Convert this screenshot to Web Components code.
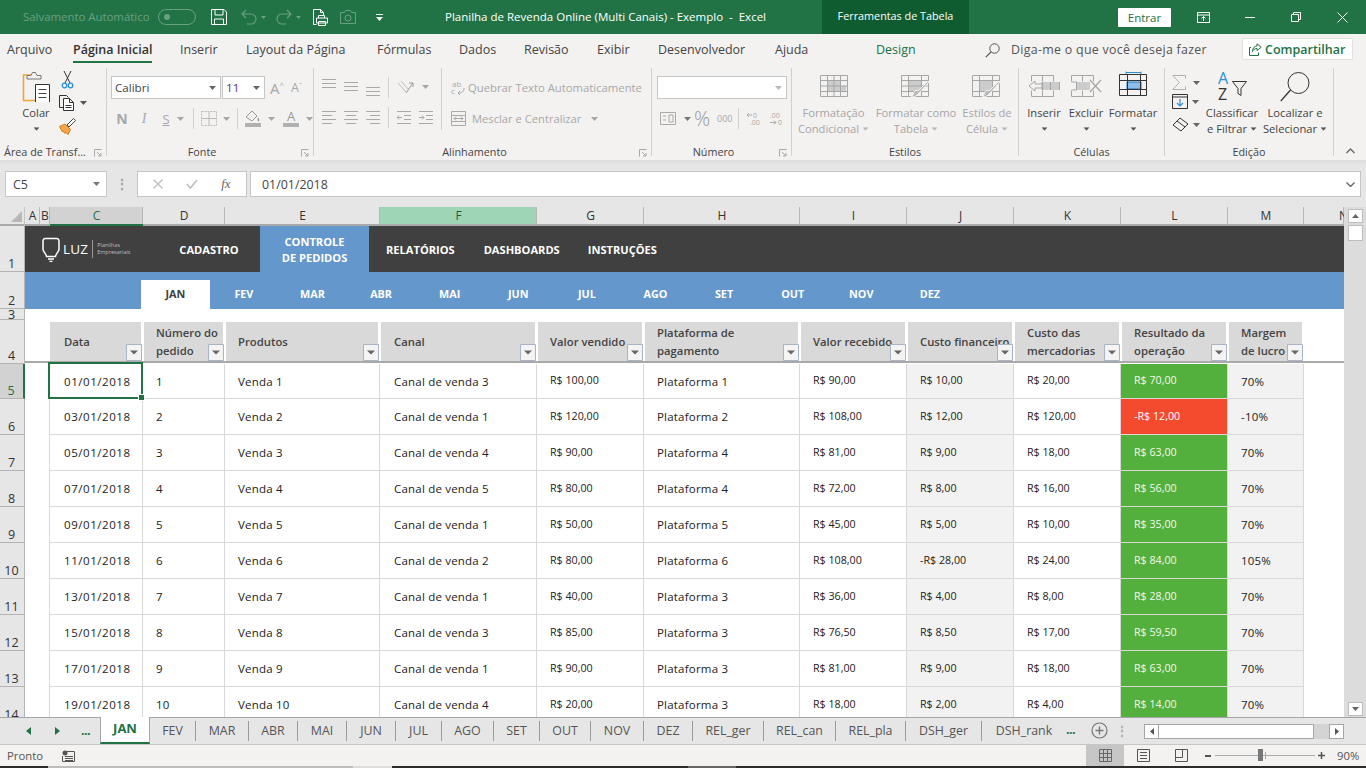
<!DOCTYPE html>
<html lang="pt-BR">
<head>
<meta charset="utf-8">
<title>Planilha de Revenda Online</title>
<style>
html, body { margin: 0; padding: 0; background: #e6e6e6; }
body { width: 1366px; height: 768px; overflow: hidden; font-family: "Open Sans", "Noto Sans", sans-serif; color: #444; display: flex; flex-direction: column; }
</style>
</head>
<body>
<x-titlebar></x-titlebar>
<x-menubar></x-menubar>
<x-ribbon></x-ribbon>
<x-formula-bar cell="C5" value="01/01/2018"></x-formula-bar>
<x-sheet></x-sheet>
<x-sheet-tabs></x-sheet-tabs>
<x-status-bar></x-status-bar>

<script>
(function(){

    // Small shared helpers for the icons
    const svg = (w, h, inner, extra = '') => `<svg width="${w}" height="${h}" viewBox="0 0 ${w} ${h}" fill="none" ${extra}>${inner}</svg>`;
    const dd = (c = '#a6a6a6') => svg(7, 4, `<path d="M0 0h7L3.5 4z" fill="${c}"/>`, 'class="dd"');
    const define = (name, css, html) => customElements.define(name, class extends HTMLElement {
        constructor() {
            super();
            this.attachShadow({ mode: 'open' }).innerHTML = `<style>${css}</style>${typeof html === 'function' ? html(this) : html}`;
        }
    });

    // Title bar
    const MUTED = '#6b9f82';
    define('x-titlebar', `
        :host { display: flex; flex: none; height: 34px; background: #217346; color: #fff; font-size: 11.5px; align-items: center; }
        div, span { flex: none; white-space: nowrap; }
        svg { flex: none; display: block; }
        .auto { width: 135px; margin: -2px 0 0 23px; color: ${MUTED}; font-size: 11.4px; }
        .toggle { width: 38px; height: 16px; box-sizing: border-box; border: 1px solid ${MUTED}; border-radius: 8px; padding: 4px 0 0 5px; margin-right: 15px; }
        .toggle i { display: block; width: 6px; height: 6px; border-radius: 50%; background: ${MUTED}; }
        .title { width: 377px; margin-top: -2px; }
        .tools { width: 147px; height: 34px; line-height: 32px; background: #0e5c2f; text-align: center; font-size: 10.8px; }
        .enter { width: 53px; height: 19px; line-height: 19px; background: #fff; color: #217346; text-align: center; border-radius: 1px; margin-left: 149px; }
    `, `
        <div class="auto">Salvamento Automático</div>
        <div class="toggle"><i></i></div>
        ${svg(16, 16, `<path d="M.5.5h12.5l2.5 2.5v12.500H.5z M4 .5v5.500h8V.500 M3.500 15.500V10h9v5.500" stroke="#fff"/>`)}
        <span style="width:14px"></span>
        ${svg(16, 16, `<path d="M5 1 1 5l4 4M1 5h9a4.500 4.500 0 0 1 0 10H6" stroke="${MUTED}" stroke-width="1.100"/>`)}
        <span style="width:4px"></span>
        ${svg(5, 3, `<path d="M0 0h5L2.500 3z" fill="${MUTED}"/>`)}
        <span style="width:10px"></span>
        ${svg(16, 16, `<path d="M11 1l4 4-4 4M15 5H6a4.500 4.500 0 0 0 0 10h4" stroke="${MUTED}" stroke-width="1.100"/>`)}
        <span style="width:4px"></span>
        ${svg(5, 3, `<path d="M0 0h5L2.500 3z" fill="${MUTED}"/>`)}
        <span style="width:12px"></span>
        ${svg(15, 17, `<path d="M.5 15.500V.5h7l3 3v3M7.500.5v3h3M.5 15.500h3" stroke="#fff"/><path d="M5.500 9V6.500h6V9M3.500 9h11v5h-11zM5.500 12.500h7v4h-7z" stroke="#fff" fill="#217346"/>`)}
        <span style="width:12px"></span>
        ${svg(16, 14, `<path d="M.5 2.500h4l1-2h5l1 2h4v11H.5z" stroke="${MUTED}"/><circle cx="8" cy="8" r="3" stroke="${MUTED}"/>`)}
        <span style="width:20px"></span>
        ${svg(7, 7, `<path d="M0 .5h7" stroke="#fff"/><path d="M0 3h7L3.500 7z" fill="#fff"/>`)}
        <span style="width:62px"></span>
        <div class="title">Planilha de Revenda Online (Multi Canais) - Exemplo&nbsp; -&nbsp; Excel</div>
        <div class="tools">Ferramentas de Tabela</div>
        <div class="enter">Entrar</div>
        <span style="width:26px"></span>
        ${svg(13, 11, `<path d="M.5.5h12v10H.5zM.5 3h12M6.500 9V4.500M4.500 6.500l2-2 2 2" stroke="#fff"/>`)}
        <span style="width:35px"></span>
        ${svg(10, 1, `<path d="M0 .5h10" stroke="#fff"/>`)}
        <span style="width:36px"></span>
        ${svg(10, 10, `<path d="M.5 2.500h7v7h-7zM2.500 2.500v-2h7v7h-2" stroke="#fff"/>`)}
        <span style="width:36px"></span>
        ${svg(11, 11, `<path d="M.5.5l10 10M10.500.5l-10 10" stroke="#fff"/>`)}
    `);

    // Menu row: [label, width up to the next item]
    const MENU = [['Arquivo',66],['Página Inicial',107],['Inserir',66],['Layout da Página',131],['Fórmulas',82],['Dados',65],['Revisão',73],['Exibir',61],['Desenvolvedor',117],['Ajuda',101]];
    define('x-menubar', `
        :host { display: flex; flex: none; height: 32px; background: #f3f2f1; font-size: 12.5px; color: #444; padding-left: 7px; box-sizing: border-box; }
        div { flex: none; white-space: nowrap; line-height: 32px; }
        .on span { display: inline-block; height: 27px; border-bottom: 2px solid #217346; color: #333; font-weight: 600; }
        .design { width: 109px; color: #217346; }
        .ask { width: 243px; color: #555; padding-left: 12px; box-sizing: border-box; font-size: 12.4px; letter-spacing: .3px; }
        .find { width: 14px; padding-top: 9px; line-height: 0; }
        .share { width: 111px; height: 22px; line-height: 21px; margin-top: 4px; background: #fff; box-sizing: border-box; border: 1px solid #e3e1df; border-radius: 2px; color: #217346; font-weight: 600; padding-left: 6px; display: flex; gap: 3px; align-items: center; }
    `, `
        ${MENU.map(([t, w]) => `<div style="width:${w}px" class="${t === 'Página Inicial' ? 'on' : ''}"><span>${t}</span></div>`).join('')}
        <div class="design">Design</div>
        <div class="find">${svg(15, 15, `<circle cx="9.500" cy="5.500" r="4.700" stroke="#555"/><path d="M6 9 .8 14.200" stroke="#555" stroke-width="1.200"/>`)}</div>
        <div class="ask">Diga-me o que você deseja fazer</div>
        <div class="share">${svg(13, 13, `<path d="M8 .8l4.200 3.500L8 7.500V5.500C5.500 5.500 4 7 3.500 8.500 3.500 5 5.500 3 8 3z M2 4.500H.5v8h9V9.500" stroke="#217346"/>`)}Compartilhar</div>
    `);

    // Ribbon group: label at the foot, right separator, optional launcher
    define('x-rgroup', `
        :host { display: flex; flex-direction: column; flex: none; height: 88px; box-sizing: border-box; border-right: 1px solid #d2d0ce; }
        .body { flex: 1; display: flex; min-height: 0; }
        .label { position: relative; height: 16px; margin-bottom: -4px; line-height: 16px; text-align: center; font-size: 10.8px; color: #444; white-space: nowrap; }
        .label.l { padding-right: 16px; }
        .launcher { position: absolute; right: 4px; top: 5px; display: block; }
    `, el => `
        <div class="body"><slot></slot></div>
        <div class="label ${el.hasAttribute('launcher') ? 'l' : ''}">${el.getAttribute('label')}${el.hasAttribute('launcher') ? svg(8, 8, `<path d="M.5.5h7M.5.5v7M3 3l4 4M4 7h3V4" stroke="#a8a8a8"/>`, 'class="launcher"') : ''}</div>
    `);
    // Large ribbon button: icon in the slot, text lines from an attribute, arrow after the last line
    define('x-bigbtn', `
        :host { display: flex; flex: none; flex-direction: column; align-items: center; box-sizing: border-box; font-size: 11.2px; line-height: 16px; white-space: nowrap; }
        .ic { height: 37px; box-sizing: border-box; display: flex; align-items: flex-start; }
        .ln { height: 16px; display: flex; align-items: center; gap: 3px; }
        svg { display: block; }
    `, el => {
        const lines = el.getAttribute('lines').split('|');
        const col = el.hasAttribute('dis') ? '#a6a6a6' : '#444';
        const top = el.getAttribute('top') || 7;
        return `<div class="ic" style="padding-top:${top}px"><slot></slot></div>` + lines.map((l, i) => `<div class="ln" style="color:${col}">${l}${i === lines.length - 1 ? dd(el.hasAttribute('dis') ? '#b8b8b8' : '#555').replace('<svg', '<svg style="transform:scale(.86)"') : ''}</div>`).join('');
    });

    // Alignment lines for the Alinhamento group
    const GR = '#a8a8a8';
    const lines3 = ys => svg(14, 18, ys.map(y => `<path d="M0 ${y}.5h14" stroke="${GR}"/>`).join(''));
    const lines4 = (k) => svg(14, 14, [[0,14],[k===0?0:k===1?2:4, k===0?10:k===1?12:14],[0,14],[k===0?0:k===1?2:4, k===0?10:k===1?12:14]].map((p, i) => `<path d="M${p[0]} ${1 + i * 4}.5H${p[1]}" stroke="${GR}"/>`).join(''));

    define('x-ribbon', `
        :host { display: flex; flex: none; height: 99px; box-sizing: border-box; padding-top: 2px; background: linear-gradient(#f3f2f1 0 94px, #dcdcdc 94px, #e6e6e6 99px); font-size: 11.2px; color: #444; }
        svg { display: block; flex: none; }
        .row { display: flex; align-items: center; }
        .col { display: flex; flex-direction: column; }
        .combo { height: 23px; box-sizing: border-box; background: #fff; border: 1px solid #c6c6c6; display: flex; align-items: center; justify-content: space-between; padding: 0 4px 0 3px; font-size: 11.6px; }
        .sep { width: 1px; height: 21px; background: #d2d0ce; flex: none; }
        .t { color: ${GR}; white-space: nowrap; }
        .chev { margin: 80px 0 0 12px; }
        .font-n { font: bold 14px "Open Sans", sans-serif; width: 22px; text-align: center; }
    `, `
        <x-rgroup label="Área de Transf..." launcher style="width:107px">
            <x-bigbtn lines="Colar|" top="4" style="width:44px;margin-left:14px">
                ${svg(29, 30, `<path d="M10 3H1.500v25.500H20" stroke="#f0a33c" stroke-width="1.600"/><path d="M5 7V3.500h4l1.500-3h3l1.500 3h4V7z" fill="#f3f2f1" stroke="#777"/><path d="M13.500 12.500h14v18h-14z" fill="#fff" stroke="#333"/><path d="M16.500 17.500h8M16.500 21.500h8M16.500 25.500h8" stroke="#444"/>`)}
            </x-bigbtn>
            <div class="col" style="margin:3px 0 0 1px;gap:7px">
                ${svg(13, 18, `<path d="M3 0l6 12M10 0 4 12" stroke="#333"/><circle cx="3.500" cy="14.500" r="2.300" stroke="#2e8fd8" stroke-width="1.300"/><circle cx="9.500" cy="14.500" r="2.300" stroke="#2e8fd8" stroke-width="1.300"/>`, 'style="margin-left:2px"')}
                <div class="row" style="gap:4px;margin-top:-1px">${svg(17, 16, `<path d="M4 12.500H.5V.5h7l2 2" stroke="#333"/><path d="M4.500 3.500h6l4 4v8h-10zM10.500 3.500v4h4M6.500 10.500h6M6.500 12.500h6" stroke="#333" fill="#fff"/>`)}${dd('#555')}</div>
                ${svg(17, 17, `<path d="M.5 8.500 6 6l5.500 5.500L9 16.500 6.500 14l-.5 1.500L4 13l-.5 1L2 11.500z" fill="#f5a54a" stroke="#e07b1a" stroke-linejoin="round"/><path d="M8 7l6.500-6.500 2 2L10 9z" fill="#fff" stroke="#444"/>`)}
            </div>
        </x-rgroup>

        <x-rgroup label="Fonte" launcher style="width:207px">
            <div class="col" style="padding:8px 0 0 4px;gap:8px">
                <div class="row">
                    <div class="combo" style="width:110px"><span>Calibri</span>${dd('#666')}</div>
                    <div class="combo" style="width:43px;margin-left:1px;color:#5b2e8a"><span>11</span>${dd('#666')}</div>
                    <span class="t" style="width:18px;margin-left:5px;font-size:15px">A<sup style="font-size:8px;vertical-align:6px">^</sup></span>
                    <span class="t" style="font-size:12.500px;margin-left:3px">A<sup style="font-size:8px;vertical-align:4px">ˇ</sup></span>
                </div>
                <div class="row" style="height:23px">
                    <span class="t font-n" style="margin-left:0">N</span>
                    <span class="t" style="width:22px;text-align:center;font:italic 14px 'Liberation Serif',serif">I</span>
                    <span class="t" style="width:22px;text-align:center;text-decoration:underline;font-size:13px">S</span>
                    ${dd()}
                    <span style="width:9px"></span><div class="sep"></div><span style="width:7px"></span>
                    ${svg(16, 15, `<path d="M.5.5h15v14H.5z" stroke="#bbb" stroke-dasharray="2 1"/><path d="M8 1v13M1 7.500h14" stroke="#bbb"/>`)}
                    <span style="width:6px"></span>${dd()}
                    <span style="width:7px"></span><div class="sep"></div><span style="width:7px"></span>
                    <div class="col" style="gap:1px">${svg(16, 12, `<path d="M1 7l6-6 5 5-5 5z" stroke="#999"/><path d="M13 7c1 2 2 3 1 4s-2 0-1-4z" fill="#999"/>`)}<div style="width:16px;height:4px;background:#b0b0b0"></div></div>
                    <span style="width:7px"></span>${dd()}
                    <span style="width:8px"></span>
                    <div class="col" style="align-items:center;line-height:12px"><span class="t" style="font-size:13px;color:#999">A</span><div style="width:16px;height:4px;background:#b0b0b0;margin-top:1px"></div></div>
                    <span style="width:7px"></span>${dd()}
                </div>
            </div>
        </x-rgroup>

        <x-rgroup label="Alinhamento" launcher style="width:338px">
            <div class="col" style="padding:10px 0 0 8px;gap:12px;width:127px;box-sizing:border-box;flex:none">
                <div class="row" style="gap:8px;height:18px">${lines3([1,5,9])}${lines3([4,8,12])}${lines3([9,13,17])}<div class="sep"></div>
                    ${svg(17, 15, `<path d="M1 3l8 9M4 1l8 9" stroke="#bbb"/><path d="M9 13 16 3M12 3h4v4" stroke="#999"/>`)}${dd()}</div>
                <div class="row" style="gap:8px;height:18px">${lines4(0)}${lines4(1)}${lines4(2)}<div class="sep"></div>
                    ${svg(14, 14, `<path d="M0 1.500h14M7 5.500h7M7 9.500h7M0 13.500h14M5 7.500H0M2 5.500l-2 2 2 2" stroke="${GR}"/>`)}${svg(14, 14, `<path d="M0 1.500h14M7 5.500h7M7 9.500h7M0 13.500h14M0 7.500h5M3 5.500l2 2-2 2" stroke="${GR}"/>`)}</div>
            </div>
            <div class="col" style="padding:8px 0 0 9px;gap:8px;border-left:1px solid #d2d0ce;height:62px;box-sizing:border-box;flex:none">
                <div class="row t" style="height:23px;gap:2px;font-size:11.300px">${svg(15, 15, `<text x="1" y="7" font-size="8" fill="#aaa" font-family="Open Sans">ab</text><text x="0" y="14" font-size="8" fill="#aaa" font-family="Open Sans">c</text><path d="M13 8c0 4-2 5-6 5M9 11l-2 2 2 2" stroke="#aaa"/>`)}Quebrar Texto Automaticamente</div>
                <div class="row t" style="height:23px;gap:2px;font-size:11.200px">${svg(15, 15, `<path d="M.5.5h14v14H.5zM.5 4.500h14M.5 10.500h14M3 7.500h9M5 5.500l-2 2 2 2M10 5.500l2 2-2 2" stroke="#aaa"/>`)}<span style="width:2px"></span>Mesclar e Centralizar<span style="width:6px"></span>${dd()}</div>
            </div>
        </x-rgroup>

        <x-rgroup label="Número" launcher style="width:140px">
            <div class="col" style="padding:8px 0 0 5px;gap:8px">
                <div class="combo" style="width:130px"><span></span>${dd('#bbb')}</div>
                <div class="row" style="height:23px;padding-left:3px">
                    ${svg(16, 13, `<path d="M.5.5h15v12H.5z" stroke="#aaa"/><path d="M3 4h3M3 8h3M9 3h4v7H9z" stroke="#aaa"/>`)}
                    <span style="width:8px"></span>${dd('#777')}<span style="width:3px"></span>
                    <span class="t" style="font-size:20px;width:21px;line-height:20px;font-weight:300;color:#999">%</span>
                    <span style="width:2px"></span>
                    <span class="t" style="font-size:9px;width:19px">000</span>
                    <div class="sep" style="margin:0 7px 0 2px"></div>
                    ${svg(17, 15, `<text x="7" y="6.500" font-size="7" fill="#aaa" font-family="Open Sans">0</text><text x="4" y="14" font-size="7" fill="#aaa" font-family="Open Sans">.00</text><path d="M6 4H1M3 2 1 4l2 2" stroke="#aaa"/>`)}
                    <span style="width:4px"></span>
                    ${svg(17, 15, `<text x="3" y="6.500" font-size="7" fill="#aaa" font-family="Open Sans">.00</text><text x="11" y="14" font-size="7" fill="#aaa" font-family="Open Sans">0</text><path d="M3 11.500h6M7 9.500l2 2-2 2" stroke="#aaa"/>`)}
                </div>
            </div>
        </x-rgroup>

        <x-rgroup label="Estilos" style="width:227px">
            <x-bigbtn dis lines="Formatação|Condicional" style="width:83px">
                ${svg(28, 22, `<path d="M8 5h12v6h6v6H8z" fill="#ccc"/><path d="M.5.5h27v21H.5zM.5 5.500h27M.5 11h27M.5 16.500h27M7.500.5v21M14 .5v21M20.500.5v21" stroke="#a6a6a6"/>`)}
            </x-bigbtn>
            <x-bigbtn dis lines="Formatar como|Tabela" style="width:82px">
                ${svg(30, 24, `<path d="M7 5h14v12H7z" fill="#ccc"/><path d="M.5.5h27v21H.5zM.5 5.500h27M.5 11h27M.5 16.500h27M7.500.5v21M20.500.5v21" stroke="#a6a6a6"/><path d="M28 7 19 17l-2 2c-1 2-4 3-7 3 2-1 2-3 3-5s3-2 4-1L27 6z" fill="#b8b8b8" stroke="#f3f2f1"/>`)}
            </x-bigbtn>
            <x-bigbtn dis lines="Estilos de|Célula" style="width:60px">
                ${svg(30, 24, `<path d="M7 5h14v12H7z" fill="#ccc"/><path d="M.5.5h27v21H.5zM.5 5.500h27M.5 16.500h27M7.500.5v21M20.500.5v21" stroke="#a6a6a6"/><path d="M28 7 19 17l-2 2c-1 2-4 3-7 3 2-1 2-3 3-5s3-2 4-1L27 6z" fill="#b8b8b8" stroke="#f3f2f1"/>`)}
            </x-bigbtn>
        </x-rgroup>

        <x-rgroup label="Células" style="width:146px">
            <x-bigbtn lines="Inserir|" style="width:50px">
                ${svg(32, 22, `<path d="M13 7h19v8H13z" fill="#ccc"/><path d="M3.500.5h22v6M3.500 21.500h22v-6M3.500.5v6M3.500 15.500v6M14.500.5v6M14.500 15.500v6M14.500 7v8M22.500 7v8M31.500 7v8" stroke="#a6a6a6"/><path d="M1 11l6-5v3h7v4H7v3z" fill="#f3f2f1" stroke="#a6a6a6"/>`)}
            </x-bigbtn>
            <x-bigbtn lines="Excluir|" style="width:34px">
                ${svg(31, 22, `<path d="M5 7h14v8H5z" fill="#ccc"/><path d="M.5.5h22v6M.5 21.500h22v-6M.5.5v6M.5 15.500v6M11.500.5v6M11.500 15.500v6M5.500 7v8M.5 7h5M.5 15h5" stroke="#a6a6a6"/><path d="M19 5l11 12M30 5 19 17" stroke="#a6a6a6" stroke-width="1.200"/>`)}
            </x-bigbtn>
            <x-bigbtn lines="Formatar|" top="3" style="width:60px">
                ${svg(28, 25, `<path d="M1 1.500h15M1 .5v3M16 .5v3" stroke="#2e8fd8" transform="translate(6 0)"/><path d="M8 11h14v7H8z" fill="#8dbdea" stroke="#1b6cb3"/><path d="M.5 3.500h27v21H.5zM.5 9.500h27M.5 18.500h27M8.500 3.500v21M21.500 3.500v21" stroke="#333"/>`)}
            </x-bigbtn>
        </x-rgroup>

        <x-rgroup label="Edição" style="width:169px">
            <div class="col" style="width:42px;padding:7px 0 0 7px;box-sizing:border-box;gap:4px">
                <div class="row" style="gap:7px">${svg(14, 15, `<path d="M13.500 3.500V.5H.8l6.500 7-6.500 7h12.700v-3" stroke="#b0b0b0"/>`)}${dd('#666')}</div>
                <div class="row" style="gap:4px">${svg(16, 15, `<path d="M.5.5h15v14H.5zM.5 3h15" stroke="#333"/><path d="M8 5v7M5 9l3 3 3-3" stroke="#2e8fd8" stroke-width="1.200"/>`)}${dd('#666')}</div>
                <div class="row" style="gap:4px;margin-top:4px">${svg(17, 15, `<path d="M1 8l7-7 8 6-7 7z" stroke="#333"/><path d="M5 4l8 6" stroke="#333"/>`)}${dd('#666')}</div>
            </div>
            <x-bigbtn lines="Classificar|e Filtrar" top="4" style="width:50px">
                ${svg(32, 29, `<text x="2" y="12" font-size="16" fill="#2e8fd8" font-family="Open Sans">A</text><text x="2" y="28" font-size="16" fill="#333" font-family="Open Sans">Z</text><path d="M16.500 9.500h14l-5.500 7v7l-3 -2v-5z" stroke="#333"/>`)}
            </x-bigbtn>
            <x-bigbtn lines="Localizar e|Selecionar" top="4" style="width:76px">
                ${svg(30, 30, `<circle cx="18.500" cy="11" r="10.500" stroke="#333"/><path d="M10.500 18 .8 29" stroke="#333" stroke-width="1.200"/>`)}
            </x-bigbtn>
        </x-rgroup>
        <div class="chev">${svg(9, 6, `<path d="M.5 5 4.500 1 8.500 5" stroke="#666" stroke-width="1.300"/>`)}</div>
    `);

    // Name box and formula input
    define('x-formula-bar', `
        :host { display: flex; flex: none; height: 42px; box-sizing: border-box; padding: 6px 5px 0; background: #e6e6e6; font-size: 12.4px; color: #444; align-items: flex-start; }
        .box { height: 26px; box-sizing: border-box; background: #fff; border: 1px solid #c6c6c6; display: flex; align-items: center; flex: none; }
        .name { width: 102px; padding: 0 6px 0 7px; justify-content: space-between; }
        .dots { width: 30px; flex: none; text-align: center; color: #a6a6a6; line-height: 26px; font-weight: bold; font-size: 14px; }
        .fx { width: 110px; justify-content: space-around; padding: 0 4px; }
        .fx i { font: italic 13px "Liberation Serif", serif; color: #666; }
        .val { width: 1111px; margin-left: 3px; padding: 0 5px 0 11px; justify-content: space-between; }
        svg { display: block; }
    `, el => `
        <div class="box name"><span>${el.getAttribute('cell')}</span>${svg(7, 4, `<path d="M0 0h7L3.500 4z" fill="#777"/>`)}</div>
        <div class="dots">⋮</div>
        <div class="box fx">
            ${svg(10, 10, `<path d="M.5.5l9 9M9.500.5l-9 9" stroke="#bdbdbd" stroke-width="1.300"/>`)}
            ${svg(12, 10, `<path d="M1 5l3.500 4L11 1" stroke="#bdbdbd" stroke-width="1.600"/>`)}
            <i>fx</i>
        </div>
        <div class="box val"><span>${el.getAttribute('value')}</span>${svg(9, 5, `<path d="M.5.5 4.500 4.500 8.500.5" stroke="#666" stroke-width="1.400"/>`)}</div>
    `);

    // The worksheet body
    const COLS = [['A',15],['B',10],['C',93],['D',82],['E',155],['F',157],['G',107],['H',156],['I',107],['J',107],['K',107],['L',107],['M',76],['N',40]];
    const HEAD = ['Data','Número do pedido','Produtos','Canal','Valor vendido','Plataforma de pagamento','Valor recebido','Custo financeiro','Custo das mercadorias','Resultado da operação','Margem de lucro'];
    const MONTHS = ['JAN','FEV','MAR','ABR','MAI','JUN','JUL','AGO','SET','OUT','NOV','DEZ'];
    const ROWS = [
        ['01/01/2018','1','Venda 1','Canal de venda 3','100,00','Plataforma 1','90,00','10,00','20,00','70,00','70%'],
        ['03/01/2018','2','Venda 2','Canal de venda 1','120,00','Plataforma 2','108,00','12,00','120,00','-R$ 12,00','-10%'],
        ['05/01/2018','3','Venda 3','Canal de venda 4','90,00','Plataforma 4','81,00','9,00','18,00','63,00','70%'],
        ['07/01/2018','4','Venda 4','Canal de venda 5','80,00','Plataforma 4','72,00','8,00','16,00','56,00','70%'],
        ['09/01/2018','5','Venda 5','Canal de venda 1','50,00','Plataforma 5','45,00','5,00','10,00','35,00','70%'],
        ['11/01/2018','6','Venda 6','Canal de venda 2','80,00','Plataforma 6','108,00','-R$ 28,00','24,00','84,00','105%'],
        ['13/01/2018','7','Venda 7','Canal de venda 1','40,00','Plataforma 3','36,00','4,00','8,00','28,00','70%'],
        ['15/01/2018','8','Venda 8','Canal de venda 3','85,00','Plataforma 3','76,50','8,50','17,00','59,50','70%'],
        ['17/01/2018','9','Venda 9','Canal de venda 1','90,00','Plataforma 3','81,00','9,00','18,00','63,00','70%'],
        ['19/01/2018','10','Venda 10','Canal de venda 4','20,00','Plataforma 3','18,00','2,00','4,00','14,00','70%']
    ];
    const MONEY = [4, 6, 7, 8, 9];
    const rs = v => v.startsWith('-') ? v : 'R$ ' + v;

    define('x-sheet', `
        :host { display: flex; flex: none; height: 510px; overflow: hidden; font-size: 11.500px; letter-spacing: .2px; color: #222; }
        .grid { flex: none; display: grid; width: 1344px; height: 510px; overflow: hidden; background: #fff;
            grid-template-columns: 25px ${COLS.map(c => c[1] + 'px').join(' ')};
            grid-template-rows: 19px 46px 37px 11px 44px 35px repeat(9, 36px); }
        .corner { background: #e6e6e6; border-bottom: 2px solid #a9a9a9; border-right: 1px solid #c6c6c6; box-sizing: border-box; display: flex; align-items: flex-end; justify-content: flex-end; padding: 0 2px 2px 0; }
        .ch { background: #e6e6e6; border-bottom: 2px solid #a9a9a9; box-sizing: border-box; box-shadow: inset -1px 0 #b8b8b8; text-align: center; font-size: 12px; line-height: 18px; color: #333; overflow: hidden; letter-spacing: 0; }
        .ch.sel { background: #d2d2d2; border-bottom-color: #217346; color: #217346; }
        .ch.act { background: #9fd5b7; color: #1f5c3a; }
        .ch.cut { text-align: left; padding-left: 35px; }
        .rh { background: #e6e6e6; border-bottom: 1px solid #b4b4b4; box-sizing: border-box; font-size: 12.500px; text-align: center; line-height: 15px; color: #333; display: flex; align-items: flex-end; justify-content: center; padding-right: 1px; overflow: hidden; border-right: 1px solid #b4b4b4; letter-spacing: 0; }
        .rh.sel { background: #d2d2d2; color: #217346; border-right: 2px solid #217346; }
        .nav { grid-column: 2 / -1; background: #404040; display: flex; color: #fff; font-weight: 700; font-size: 11.100px; letter-spacing: 0; align-items: center; height: 46px; }
        .logo { width: 133px; flex: none; display: flex; align-items: center; padding-left: 17px; box-sizing: border-box; font-weight: 400; font-size: 11px; gap: 3px; }
        .logo b { font-weight: 400; font-size: 13.500px; letter-spacing: .2px; }
        .logo small { font-size: 5.500px; line-height: 7px; color: #bdbdbd; border-left: 1px solid #999; padding: 2px 0 2px 4px; margin-left: 1px; }
        .nav div.i { flex: none; text-align: center; white-space: nowrap; }
        .nav .on { height: 46px; box-sizing: border-box; background: #6497cc; padding-top: 8px; line-height: 16px; }
        .tabs { grid-column: 2 / -1; background: #6497cc; display: flex; padding-left: 116px; color: #fff; font-weight: 700; font-size: 10.800px; letter-spacing: 0; align-items: flex-end; }
        .tabs div { flex: 0 0 68.600px; height: 29px; line-height: 27px; text-align: center; }
        .tabs div.on { background: #fff; color: #404040; }
        .band { grid-column: 2 / -1; }
        .rule { grid-row: 5; grid-column: 2 / -1; border-bottom: 2px solid #a9a9a9; box-sizing: border-box; height: 43px; }
        .hd { grid-row: 5; position: relative; background: #d9d9d9; margin: 2px 2px 3px 1px; display: flex; align-items: center; padding-left: 12px; font-weight: 600; font-size: 11.300px; letter-spacing: 0; line-height: 18px; color: #444; box-sizing: border-box; }
        .hd.c1 { margin-left: 0; padding-left: 14px; }
        .hd.c4 { padding-left: 13px; }
        .hd span { width: calc(100% - 2px); }
        .hd svg { position: absolute; right: -1px; bottom: 0; }
        .c { border-right: 1px solid #d9d9d9; border-bottom: 1px solid #d9d9d9; box-sizing: border-box; padding-left: 13px; display: flex; align-items: center; white-space: nowrap; position: relative; }
        .c.p14 { padding-left: 14px; }
        .c.first { box-shadow: -1px 0 #d9d9d9; letter-spacing: .55px; }
        .c.m span { font-size: 10.700px; margin-top: -2px; letter-spacing: 0; }
        .c.g { background: #f2f2f2; }
        .c.ok { background: #54b03c; color: #f2f8ee; }
        .c.bad { background: #f44a2e; color: #fff; }
        .c.cur::after { content: ""; position: absolute; inset: -2px -1px -1px -2px; border: 2px solid #217346; }
        .c.cur::before { content: ""; position: absolute; z-index: 1; right: -3px; bottom: -3px; width: 5px; height: 5px; background: #217346; border: 1px solid #fff; box-sizing: content-box; }
        .vs { flex: none; width: 22px; background: #dcdcdc; display: flex; flex-direction: column; align-items: center; box-sizing: border-box; padding: 2px 0 1px 1px; }
        .vs .b { width: 15px; height: 14px; background: #fff; border: 1px solid #bdbdbd; box-sizing: border-box; display: flex; align-items: center; justify-content: center; flex: none; }
        .vs .th { width: 15px; height: 16px; background: #fff; border: 1px solid #bdbdbd; box-sizing: border-box; margin-top: 2px; flex: none; }
        .vs .sp { flex: 1; }
    `, () => {
        let h = `<div class="grid">`;
        // Column headers
        h += `<div class="corner">${svg(11, 11, `<path d="M11 0v11H0z" fill="#b8b8b8"/>`)}</div>`;
        COLS.forEach(([n]) => { h += `<div class="ch ${n === 'C' ? 'sel' : n === 'F' ? 'act' : n === 'N' ? 'cut' : ''}">${n}</div>`; });
        // Row 1: navigation strip
        h += `<div class="rh">1</div><div class="nav">
            <div class="logo">${svg(18, 26, `<path d="M3 2.500h12a2.500 2.500 0 0 1 2 2.500v8c0 3-3 4-3.500 7.500h-9C4 17 1 16 1 13V5a2.500 2.500 0 0 1 2-2.500z" stroke="#fff" stroke-width="1.500"/><path d="M6 23h6M7.500 25.300h3" stroke="#fff" stroke-width="1.300"/>`)}<b>LUZ</b><small>Planilhas<br>Empresariais</small></div>
            <div class="i" style="width:102px">CADASTRO</div>
            <div class="i on" style="width:109px">CONTROLE<br>DE PEDIDOS</div>
            <div class="i" style="margin-left:17px">RELATÓRIOS</div>
            <div class="i" style="margin-left:29px">DASHBOARDS</div>
            <div class="i" style="margin-left:28px">INSTRUÇÕES</div>
        </div>`;
        // Row 2: months
        h += `<div class="rh">2</div><div class="tabs">${MONTHS.map((m, i) => `<div class="${i ? '' : 'on'}">${m}</div>`).join('')}</div>`;
        // Row 3: spacer
        h += `<div class="rh" style="line-height:11px;align-items:flex-start">3</div><div class="band"></div>`;
        // Row 4: table head with its filter buttons
        h += `<div class="rh" style="grid-row:5;grid-column:1">4</div><div class="rule"></div>`;
        HEAD.forEach((t, i) => {
            h += `<div class="hd ${i === 0 ? 'c1' : i === 3 ? 'c4' : ''}" style="grid-column:${i + 4}"><span>${t}</span>${svg(16, 17, `<path d="M.5.5h15v16H.5z" fill="#f4f4f4" stroke="#a9b4c4"/><path d="M4 6.500h8l-4 4z" fill="#666"/>`)}</div>`;
        });
        // Data rows
        ROWS.forEach((r, ri) => {
            const row = ri + 6;
            h += `<div class="rh ${ri ? '' : 'sel'}" style="grid-row:${row};grid-column:1">${ri + 5}</div>`;
            r.forEach((v, ci) => {
                const money = MONEY.includes(ci);
                let cls = money ? 'm' : '';
                if (ci === 0) cls += ' first p14';
                if (ci === 3) cls += ' p14';
                if (ci === 7 || ci === 10) cls += ' g';
                if (ci === 9) cls += v.startsWith('-') ? ' bad' : ' ok';
                if (ci === 0 && ri === 0) cls += ' cur';
                h += `<div class="c ${cls}" style="grid-row:${row};grid-column:${ci + 4}"><span>${money ? rs(v) : v}</span></div>`;
            });
        });
        h += `</div><div class="vs">
            <div class="b">${svg(7, 4, `<path d="M0 4h7L3.500 0z" fill="#666"/>`)}</div>
            <div class="th"></div><div class="sp"></div>
            <div class="b">${svg(7, 4, `<path d="M0 0h7L3.500 4z" fill="#666"/>`)}</div>
        </div>`;
        return h;
    });

    // Sheet tabs and the horizontal scrollbar
    const SHEETS = [['FEV',46],['MAR',53],['ABR',49],['MAI',49],['JUN',49],['JUL',46],['AGO',52],['SET',46],['OUT',51],['NOV',53],['DEZ',49],['REL_ger',71],['REL_can',72],['REL_pla',70],['DSH_ger',76],['DSH_rank',84]];
    define('x-sheet-tabs', `
        :host { display: flex; flex: none; height: 28px; box-sizing: border-box; background: #e6e6e6; border-top: 1px solid #a6a6a6; border-bottom: 1px solid #c6c6c6; font-size: 12.400px; color: #555; align-items: flex-start; }
        svg { display: block; flex: none; }
        .nav { width: 100px; flex: none; height: 26px; display: flex; align-items: center; box-sizing: border-box; padding-left: 26px; color: #217346; font-weight: 700; }
        .cur { width: 50px; flex: none; height: 25px; line-height: 23px; background: #fff; color: #217346; font-weight: 700; text-align: center; border-bottom: 2px solid #217346; border-left: 1px solid #a6a6a6; border-right: 1px solid #a6a6a6; box-sizing: border-box; margin-top: -1px; height: 27px; font-size: 13px; }
        .t { flex: none; height: 20px; line-height: 19px; margin-top: 3px; text-align: center; box-sizing: border-box; border-right: 1px solid #9a9a9a; }
        .t.last { border-right: 0; }
        .more { color: #217346; font-weight: 700; width: 13px; flex: none; letter-spacing: -.5px; line-height: 22px; }
        .hs { display: flex; flex: none; width: 200px; height: 15px; margin-top: 6px; box-sizing: border-box; }
        .hs .b { width: 15px; height: 15px; background: #fff; border: 1px solid #a6a6a6; box-sizing: border-box; display: flex; align-items: center; justify-content: center; flex: none; }
        .hs .th { width: 155px; background: #fff; border: 1px solid #a6a6a6; border-left: 0; box-sizing: border-box; flex: none; }
        .hs .tr { width: 15px; background: #d4d4d4; flex: none; }
    `, `
        <div class="nav">
            ${svg(5, 8, `<path d="M5 0v8L0 4z" fill="#217346"/>`)}<span style="width:24px"></span>
            ${svg(5, 8, `<path d="M0 0v8l5-4z" fill="#217346"/>`)}<span style="width:21px"></span>
            <span style="letter-spacing:-.5px;line-height:14px">...</span>
        </div>
        <div class="cur">JAN</div>
        ${SHEETS.map(([t, w], i) => `<div class="t ${i === SHEETS.length - 1 ? 'last' : ''}" style="width:${w}px">${t}</div>`).join('')}
        <div class="more" style="margin-top:1px">...</div>
        <span style="width:12px;flex:none"></span>
        ${svg(17, 17, `<circle cx="8.500" cy="8.500" r="7.500" stroke="#777" stroke-width="1.200"/><path d="M8.500 4.500v8M4.500 8.500h8" stroke="#777" stroke-width="1.400"/>`, 'style="margin-top:4px"')}
        <span style="width:21px;flex:none;text-align:center;color:#aaa;font-weight:700;margin-left:3px;line-height:26px">⋮</span>
        <span style="width:12px;flex:none"></span>
        <div class="hs">
            <div class="b">${svg(4, 7, `<path d="M4 0v7L0 3.500z" fill="#555"/>`)}</div>
            <div class="th"></div><div class="tr"></div>
            <div class="b">${svg(4, 7, `<path d="M0 0v7l4-3.500z" fill="#555"/>`)}</div>
        </div>
    `);

    // Status bar with the view buttons and zoom slider; the strip under it belongs to the desktop behind
    define('x-status-bar', `
        :host { display: flex; flex: none; height: 23px; box-sizing: border-box; padding-bottom: 2px; font-size: 11.300px; color: #555; align-items: center;
            background: linear-gradient(90deg, #2c2c2c 0 48px, #bdbdbd 48px 353px, #dcdcdc 353px 392px, #2c2c2c 392px 688px, #666 688px 736px, #2c2c2c 736px) bottom / 100% 2px no-repeat, #f3f2f1; }
        svg { display: block; flex: none; }
        .v { width: 38px; height: 21px; flex: none; display: flex; align-items: center; justify-content: center; }
        .v.on { background: #c6c6c6; }
        .slider { width: 100px; height: 1px; background: #aaa; position: relative; flex: none; }
        .slider i { position: absolute; left: 43px; top: -6px; width: 5px; height: 12px; background: #777; }
        .slider u { position: absolute; left: 50px; top: -3px; width: 1px; height: 7px; background: #aaa; }
    `, `
        <span style="margin-left:7px;width:55px;flex:none">Pronto</span>
        ${svg(13, 12, `<circle cx="3" cy="3" r="2.500" fill="#555"/><path d="M5 1.500h7.500v10H.5V6M3 6.500h8M3 8.500h8M3 10.500h8" stroke="#555"/>`)}
        <span style="flex:none;width:1011px"></span>
        <div class="v on">${svg(13, 13, `<path d="M.5.5h12v12H.5zM4.500.5v12M8.500.5v12M.5 4.500h12M.5 8.500h12" stroke="#666"/>`)}</div>
        <div class="v">${svg(13, 13, `<path d="M.5.5h12v12H.5zM3 3.500h7M3 6.500h7M3 9.500h7" stroke="#555"/>`)}</div>
        <div class="v">${svg(13, 13, `<path d="M.5.5h12v12H.5zM.5 8.500h7V.5" stroke="#555"/>`)}</div>
        <span style="width:5px;flex:none"></span>
        ${svg(6, 2, `<path d="M0 1h6" stroke="#555" stroke-width="2"/>`)}
        <span style="width:4px;flex:none"></span>
        <div class="slider"><i></i><u></u></div>
        <span style="width:3px;flex:none"></span>
        ${svg(7, 7, `<path d="M0 3.500h7M3.500 0v7" stroke="#555" stroke-width="1.500"/>`)}
        <span style="width:12px;flex:none"></span>
        <span style="flex:none">90%</span>
    `);

})();
</script>
</body>
</html>
